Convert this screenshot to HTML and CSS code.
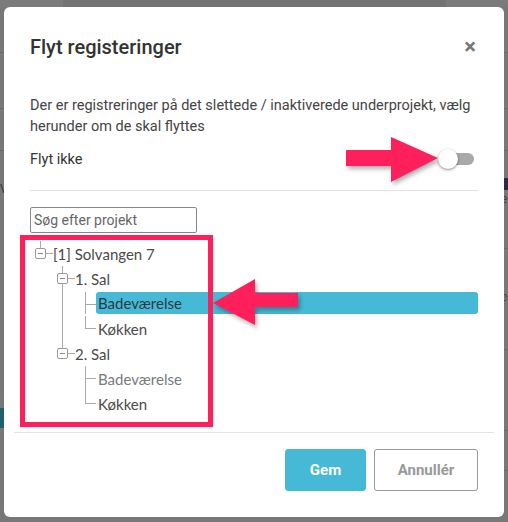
FILE: index.html
```html
<!DOCTYPE html>
<html lang="da">
<head>
<meta charset="utf-8">
<title>Flyt registeringer</title>
<link rel="stylesheet" href="styles.css">
</head>
<body>
<div class="backdrop">
  <div class="bg-top"><span class="bg-top-l"></span><span class="bg-top-m"></span><span class="bg-top-r"></span></div>
  <div class="bg-side bg-left">
    <span class="bg-line l52"></span>
    <span class="bg-line l108"></span>
    <span class="bg-line l150"></span>
    <span class="bg-glyph g182">V</span>
    <span class="bg-teal"></span>
  </div>
  <div class="bg-side bg-right">
    <span class="bg-line l52"></span>
    <span class="bg-line l108"></span>
    <span class="bg-line l150"></span>
    <span class="bg-navy"></span>
    <span class="bg-glyph g192">e</span>
    <span class="bg-line l248"></span>
    <span class="bg-glyph g290">e</span>
    <span class="bg-line l297"></span>
    <span class="bg-line l349"></span>
    <span class="bg-line l430"></span>
    <span class="bg-line l470"></span>
  </div>
</div>

<div class="modal">
  <div class="modal-header">
    <h1 class="modal-title">Flyt registeringer</h1>
    <span class="modal-close">×</span>
  </div>
  <div class="modal-body">
    <p class="intro">Der er registreringer på det slettede / inaktiverede underprojekt, vælg herunder om de skal flyttes</p>
    <div class="switch-row">
      <span class="switch-label">Flyt ikke</span>
      <span class="switch"><span class="switch-track"></span><span class="switch-knob"></span></span>
    </div>
    <hr class="divider">
    <input class="search" type="text" placeholder="Søg efter projekt">
    <ul class="tree">
      <li class="lvl0 last">
        <div class="row"><span class="box"></span><span class="stub"></span><span class="label">[1] Solvangen 7</span></div>
        <ul class="sub1">
          <li class="lvl1">
            <div class="row"><span class="box"></span><span class="stub"></span><span class="label">1. Sal</span></div>
            <ul class="sub2">
              <li class="lvl2"><div class="row leaf selected"><span class="label">Badeværelse</span></div></li>
              <li class="lvl2 last"><div class="row leaf"><span class="label">Køkken</span></div></li>
            </ul>
          </li>
          <li class="lvl1 last">
            <div class="row"><span class="box"></span><span class="stub"></span><span class="label">2. Sal</span></div>
            <ul class="sub2">
              <li class="lvl2"><div class="row leaf muted"><span class="label">Badeværelse</span></div></li>
              <li class="lvl2 last"><div class="row leaf"><span class="label">Køkken</span></div></li>
            </ul>
          </li>
        </ul>
      </li>
    </ul>
  </div>
  <hr class="footer-divider">
  <div class="modal-footer">
    <button class="btn btn-primary">Gem</button>
    <button class="btn btn-default">Annullér</button>
  </div>

  <div class="annot-box"></div>
  <svg class="arrow arrow-right" width="100" height="60" viewBox="0 0 100 60">
    <polygon points="0,13 45,13 45,0 92,21 45,45 45,29 0,29" fill="#fe1f5b"/>
  </svg>
  <svg class="arrow arrow-left" width="90" height="50" viewBox="0 0 90 50">
    <polygon points="0,24 42,0 42,14 85,14 85,28 42,28 42,46" fill="#fe1f5b"/>
  </svg>
</div>
</body>
</html>
```

FILE: styles.css
```css
* { box-sizing: border-box; }
html, body { margin: 0; padding: 0; }
body {
  width: 508px;
  height: 522px;
  overflow: hidden;
  background: #787878;
  font-family: Roboto, "Liberation Sans", sans-serif;
  position: relative;
}

/* dimmed page behind the dialog */
.backdrop { position: absolute; inset: 0; }
.bg-top { display: flex; height: 7px; }
.bg-top-l { width: 63px; background: #7b7b7b; }
.bg-top-m { flex: 1; background: #737373; }
.bg-top-r { width: 62px; background: #7b7b7b; }
.bg-side { position: absolute; top: 0; bottom: 0; width: 4px; }
.bg-left { left: 0; }
.bg-right { right: 0; }
.bg-line { position: absolute; left: 0; right: 0; height: 1px; background: #686868; }
.l52 { top: 52px; }
.l108 { top: 108px; }
.l150 { top: 150px; }
.l248 { top: 248px; }
.l297 { top: 297px; }
.l349 { top: 349px; }
.l430 { top: 430px; }
.l470 { top: 470px; }
.bg-glyph { position: absolute; left: 0; font-size: 12px; line-height: 14px; color: #3a3a3a; }
.bg-right .bg-glyph { left: -3px; color: #444; }
.g182 { top: 182px; }
.g192 { top: 192px; }
.g290 { top: 290px; }
.bg-teal { position: absolute; left: 0; top: 408px; width: 4px; height: 20px; background: #225f6c; }
.bg-navy { position: absolute; left: 0; top: 178px; width: 4px; height: 12px; background: #2a2a48; }

/* dialog */
.modal {
  position: absolute;
  left: 4px;
  top: 7px;
  width: 500px;
  height: 510px;
  background: #fff;
  border-radius: 6px;
  display: flex;
  flex-direction: column;
}
.modal-header {
  display: flex;
  justify-content: space-between;
  align-items: center;
  padding: 28px 26px 0 26px;
}
.modal-title {
  margin: 0;
  font-size: 20px;
  line-height: 24px;
  font-weight: 500;
  color: #333;
}
.modal-close {
  font-size: 22px;
  line-height: 24px;
  font-weight: 700;
  color: #777;
  margin-right: 2px;
}
.modal-body { padding: 0 26px; }
.intro {
  margin: 36px 0 0 0;
  font-size: 14.5px;
  line-height: 21px;
  color: #444;
}
.switch-row {
  display: flex;
  justify-content: space-between;
  align-items: center;
  height: 24px;
  margin-top: 10px;
}
.switch-label { font-size: 14.5px; color: #333; }
.switch { position: relative; width: 36px; height: 20px; margin-right: 4px; }
.switch-track {
  position: absolute; left: 2px; top: 4px; width: 34px; height: 12px;
  border-radius: 6px; background: #a9a9a9;
}
.switch-knob {
  position: absolute; left: 0; top: 0; width: 20px; height: 20px;
  border-radius: 50%; background: #fff;
  box-shadow: 0 1px 3px rgba(0,0,0,0.45);
}
.divider { border: 0; border-top: 1px solid #e3e3e3; margin: 19px 0 0 0; }
.search {
  display: block;
  margin-top: 16px;
  width: 167px;
  height: 26px;
  border: 1px solid #888;
  border-radius: 2px;
  padding: 0 3px;
  font-family: Roboto, "Liberation Sans", sans-serif;
  font-size: 14px;
  color: #333;
}
.search::placeholder { color: #666; }

/* tree */
.tree, .tree ul { list-style: none; margin: 0; padding: 0; }
.tree { margin-top: 8px; }
.tree li { position: relative; }
.tree li::before {
  content: ""; position: absolute; left: 10px; top: 0; bottom: 0;
  border-left: 1px solid #aaa;
}
.tree li.last::before { bottom: auto; height: 12px; }
.tree .lvl0 { padding-left: 5px; }
.tree .sub1 { padding-left: 17px; }
.tree .lvl1 { padding-left: 5px; }
.tree .sub2 { padding-left: 18px; }
.tree .lvl2 { padding-left: 21px; }
.tree .lvl2::after {
  content: ""; position: absolute; left: 10px; top: 12px; width: 11px;
  border-top: 1px solid #aaa;
}
.row {
  display: flex;
  align-items: center;
  height: 25px;
  font-family: Lato, "Open Sans", sans-serif;
  font-size: 15px;
  color: #4a4a4a;
  position: relative;
}
.box {
  width: 11px; height: 11px;
  border: 1px solid #999;
  border-radius: 2px;
  background: #fff;
  position: relative;
  z-index: 1;
}
.box::after {
  content: ""; position: absolute; left: 2px; right: 2px; top: 4px;
  border-top: 1px solid #888;
}
.stub { width: 7px; border-top: 1px solid #aaa; }
.leaf .label { padding-left: 2px; }
.leaf.selected {
  background: #45b9d5;
  border-radius: 3px;
  height: 22px;
  margin: 1px 0 2px 0;
  color: #2d3a40;
}
.leaf.muted { color: #7a7a7a; }

/* footer */
.footer-divider { border: 0; border-top: 1px solid #e3e3e3; margin: auto 10px 0 10px; width: 480px; }
.modal-footer {
  display: flex;
  justify-content: flex-end;
  gap: 8px;
  padding: 16px 26px 26px 26px;
}
.btn {
  height: 42px;
  border-radius: 3px;
  font-family: Roboto, "Liberation Sans", sans-serif;
  font-size: 15px;
  font-weight: 700;
}
.btn-primary { width: 81px; background: #45b9d5; border: 1px solid #45b9d5; color: #fff; }
.btn-default { width: 104px; background: #fff; border: 1px solid #999; color: #999; }

/* annotations */
.annot-box {
  position: absolute;
  left: 16px; top: 228px;
  width: 193px; height: 192px;
  border: 5px solid #fe1f5b;
}
.arrow { position: absolute; filter: drop-shadow(2px 3px 2px rgba(0,0,0,0.3)); }
.arrow-right { left: 342px; top: 130px; }
.arrow-left { left: 209px; top: 272px; }
```
